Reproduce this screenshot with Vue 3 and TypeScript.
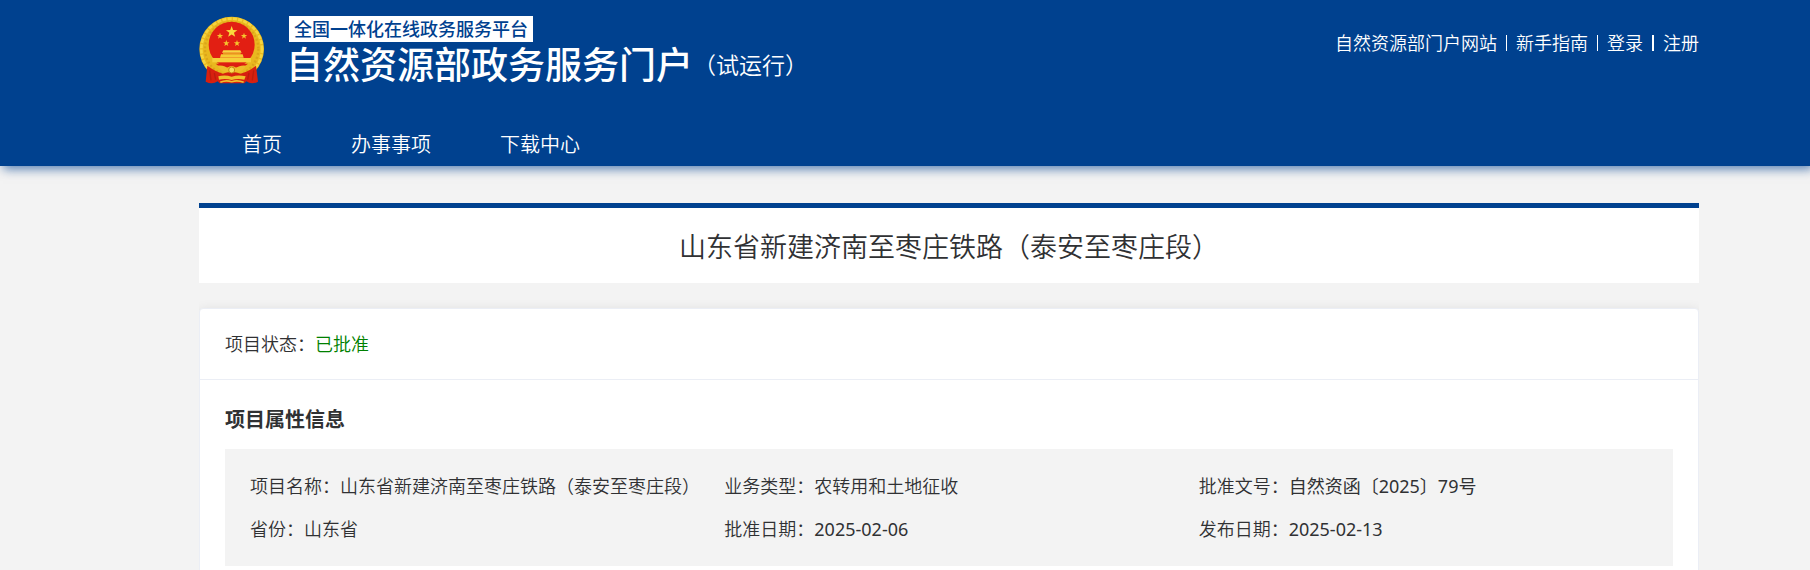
<script setup lang="ts">
interface NavLink {
  label: string
  href: string
}

interface Field {
  label: string
  value: string
}

const userLinks: NavLink[] = [
  { label: '自然资源部门户网站', href: '#portal' },
  { label: '新手指南', href: '#guide' },
  { label: '登录', href: '#login' },
  { label: '注册', href: '#register' },
]

const navLinks: NavLink[] = [
  { label: '首页', href: '#home' },
  { label: '办事事项', href: '#services' },
  { label: '下载中心', href: '#downloads' },
]

const projectName = '山东省新建济南至枣庄铁路（泰安至枣庄段）'

const fields: Field[] = [
  { label: '项目名称', value: projectName },
  { label: '业务类型', value: '农转用和土地征收' },
  { label: '批准文号', value: '自然资函〔2025〕79号' },
  { label: '省份', value: '山东省' },
  { label: '批准日期', value: '2025-02-06' },
  { label: '发布日期', value: '2025-02-13' },
]

const hasDigits = (text: string): boolean => /\d/.test(text)

const smallStars = [
  { x: 63, y: 59 },
  { x: 82, y: 81 },
  { x: 114, y: 81 },
  { x: 135, y: 59 },
]

const starPoints = '0,-10 2.4,-3.2 9.5,-3.1 3.8,1.2 5.9,8.1 0,4 -5.9,8.1 -3.8,1.2 -9.5,-3.1 -2.4,-3.2'
</script>

<template>
  <div class="page">
    <header class="header">
      <div class="header-top">
        <div class="brand">
          <svg class="emblem" viewBox="0 0 198 202" aria-hidden="true">
            <circle cx="98" cy="98" r="97" fill="#e9b81f" />
            <circle cx="98" cy="98" r="91" fill="none" stroke="#f5d53f" stroke-width="8" stroke-dasharray="12 4" />
            <circle cx="98" cy="98" r="80" fill="none" stroke="#dca51a" stroke-width="7" stroke-dasharray="6 6" />
            <path d="M25 148 Q50 166 72 172 Q98 160 124 172 Q148 166 171 148 L177 196 Q158 206 142 195 L136 201 H62 L56 195 Q40 206 20 196 Z" fill="#d7200f" />
            <path d="M32 162 L36 192 M46 170 L50 190 M150 170 L146 190 M164 162 L160 192" stroke="#bb1c0e" stroke-width="4" />
            <circle cx="98" cy="85" r="69" fill="#e21f13" />
            <polygon :points="starPoints" transform="translate(98 47) scale(1.8)" fill="#f9da3c" />
            <polygon
              v-for="star in smallStars"
              :key="star.x"
              :points="starPoints"
              :transform="`translate(${star.x} ${star.y})`"
              fill="#f5c52d"
            />
            <path d="M73 102 H124 L128 109 H69 Z" fill="#f7d542" />
            <rect x="72" y="110" width="53" height="4" fill="#e9951c" />
            <path d="M66 114 H131 L134 124 H63 Z" fill="#f5cb34" />
            <rect x="40" y="125" width="116" height="13" fill="#f6cf3a" />
            <path d="M50 142 H147 L133 153 H64 Z" fill="#dc1e12" />
            <path d="M56 148 Q78 146 84 156 Q98 142 112 156 Q120 146 141 148 Q132 166 114 168 H82 Q64 166 56 148 Z" fill="#eebd2a" />
            <circle cx="98" cy="161" r="9" fill="#f8df5b" stroke="#c98513" stroke-width="3" />
            <path d="M58 180 Q78 175 98 181 Q118 175 140 180 L136 190 Q116 186 98 191 Q80 186 60 190 Z" fill="#efc12c" />
            <path d="M64 198 Q80 190 98 196 Q116 190 134 198" fill="none" stroke="#efc12c" stroke-width="5" />
          </svg>
          <div class="brand-text">
            <span class="platform">全国一体化在线政务服务平台</span>
            <div class="site-name">
              <span class="site-title">自然资源部政务服务门户</span>
              <span class="trial">（试运行）</span>
            </div>
          </div>
        </div>
        <nav class="user-links" aria-label="用户">
          <a v-for="link in userLinks" :key="link.label" :href="link.href">{{ link.label }}</a>
        </nav>
      </div>
      <nav class="main-nav" aria-label="主导航">
        <a v-for="link in navLinks" :key="link.label" :href="link.href">{{ link.label }}</a>
      </nav>
    </header>

    <main class="content">
      <h1 class="project-title">{{ projectName }}</h1>
      <div class="card-area">
        <article class="card">
          <p class="status">项目状态：<span class="status-value">已批准</span></p>
          <section class="card-body">
            <h2 class="section-title">项目属性信息</h2>
            <dl class="fields">
              <div v-for="field in fields" :key="field.label" class="field">
                <dt>{{ field.label }}：</dt>
                <dd :class="{ numeric: hasDigits(field.value) }">{{ field.value }}</dd>
              </div>
            </dl>
          </section>
        </article>
      </div>
    </main>
  </div>
</template>

<style>
body {
  margin: 0;
  background: #f3f3f3;
}
</style>

<style scoped>
.page {
  overflow: hidden;
  font-family: "Noto Sans", "Noto Sans CJK SC", sans-serif;
  font-size: 18px;
  font-weight: 350;
  color: #303133;
}

a {
  color: #fff;
  text-decoration: none;
}

.header {
  padding: 16px 111px 0 199px;
  background: #00418f;
  box-shadow: 3px 3px 10px rgba(0, 65, 143, 0.65);
}

.header-top {
  display: flex;
  justify-content: space-between;
  align-items: flex-start;
}

.brand {
  display: flex;
  gap: 24px;
}

.emblem {
  width: 66px;
  height: 68px;
}

.brand-text {
  display: flex;
  flex-direction: column;
  align-items: flex-start;
  color: #fff;
}

.platform {
  padding: 0 5px;
  background: #fff;
  color: #00418f;
  font-weight: 500;
  line-height: 26px;
}

.site-name {
  display: flex;
  align-items: center;
  margin-left: -3px;
  line-height: 46px;
}

.site-title {
  font-size: 37px;
  font-weight: 500;
}

.trial {
  font-size: 23px;
}

.user-links {
  display: flex;
  align-items: center;
  padding-top: 14px;
  line-height: 26px;
}

.user-links a {
  display: flex;
  align-items: center;
}

.user-links a + a::before {
  content: "";
  width: 1px;
  height: 16px;
  margin: 0 9px;
  background: #fff;
}

.user-links a:last-child::before {
  width: 2px;
}

.main-nav {
  display: flex;
  gap: 69px;
  padding: 36px 43px 0;
  font-size: 20px;
  line-height: 42px;
}

.content {
  margin: 37px 111px 0 199px;
}

.project-title {
  margin: 0;
  padding-top: 3px;
  border-top: 5px solid #00418f;
  background: #fff;
  font-size: 27px;
  font-weight: 350;
  line-height: 72px;
  text-align: center;
}

.card-area {
  overflow: hidden;
  padding-top: 25px;
}

.card {
  border: 1px solid #ebeef5;
  border-radius: 4px;
  background: #fff;
  box-shadow: 0 2px 12px rgba(0, 0, 0, 0.1);
}

.status {
  margin: 0;
  padding: 0 25px;
  border-bottom: 1px solid #ebeef5;
  line-height: 70px;
}

.status-value {
  color: #008000;
}

.card-body {
  padding: 25px;
}

.section-title {
  margin: 0 0 14px;
  font-size: 20px;
  font-weight: 700;
  line-height: 30px;
}

.fields {
  display: grid;
  grid-template-columns: repeat(3, 1fr);
  margin: 0;
  padding: 16px 0 15px 25px;
  background: #f3f3f3;
}

.field {
  display: flex;
  line-height: 43px;
  white-space: nowrap;
}

.field dd {
  margin: 0;
}

.field .numeric {
  font-weight: 400;
}
</style>
